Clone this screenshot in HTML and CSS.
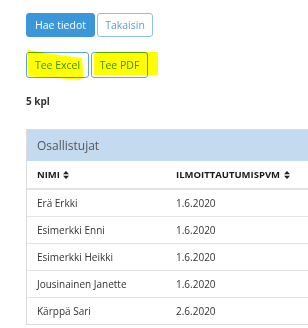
FILE: index.html
```html
<!DOCTYPE html>
<html lang="fi">
<head>
<meta charset="utf-8">
<link rel="stylesheet" href="styles.css">
</head>
<body>
<div class="page">
  <div class="btn-row top">
    <button class="btn primary">Hae tiedot</button>
    <button class="btn outline">Takaisin</button>
  </div>
  <div class="btn-row second">
    <button class="btn outline tall w-excel">Tee Excel</button>
    <button class="btn outline tall w-pdf">Tee PDF</button>
    <svg class="highlight" width="140" height="40" viewBox="0 0 140 40">
      <polygon points="1,0 20,3 40,6 55,8 56,20 56,27 53,30 30,28 10,27 1,26" fill="#ffff00"/>
      <polygon points="67,4 70,2 131,2 131,25 67,25" fill="#ffff00"/>
    </svg>
  </div>
  <div class="count">5 kpl</div>
  <div class="panel">
    <div class="panel-head">Osallistujat</div>
    <table class="grid">
      <thead>
        <tr>
          <th class="c1">NIMI <svg class="sort" width="6" height="8" viewBox="0 0 6 8"><polygon points="3,0 6,3.2 0,3.2" fill="#222"/><polygon points="0,4.8 6,4.8 3,8" fill="#222"/></svg></th>
          <th class="c2">ILMOITTAUTUMISPVM <svg class="sort" width="6" height="8" viewBox="0 0 6 8"><polygon points="3,0 6,3.2 0,3.2" fill="#222"/><polygon points="0,4.8 6,4.8 3,8" fill="#222"/></svg></th>
        </tr>
      </thead>
      <tbody>
        <tr><td class="c1">Erä Erkki</td><td class="c2">1.6.2020</td></tr>
        <tr><td class="c1">Esimerkki Enni</td><td class="c2">1.6.2020</td></tr>
        <tr><td class="c1">Esimerkki Heikki</td><td class="c2">1.6.2020</td></tr>
        <tr><td class="c1">Jousinainen Janette</td><td class="c2">1.6.2020</td></tr>
        <tr><td class="c1">Kärppä Sari</td><td class="c2">2.6.2020</td></tr>
      </tbody>
    </table>
  </div>
</div>
</body>
</html>
```

FILE: styles.css
```css
html, body {
  margin: 0;
  padding: 0;
  background: #fff;
  overflow: hidden;
}
body {
  font-family: "Open Sans", "Noto Sans", sans-serif;
  color: #333;
}
.page {
  padding: 13px 0 0 26px;
}
.btn-row {
  display: flex;
  gap: 2px;
  position: relative;
}
.btn-row.second {
  margin-top: 15px;
}
.btn {
  box-sizing: border-box;
  font-family: inherit;
  font-size: 10.5px;
  height: 24px;
  padding: 0;
  border-radius: 3px;
  border: 1px solid #8cc0e8;
  background: #fff;
  color: #5a9fd9;
  line-height: 22px;
  margin: 0;
  white-space: nowrap;
  text-align: center;
}
.btn.primary {
  background: #3b97d9;
  border-color: #3b97d9;
  color: #fff;
  width: 69px;
}
.btn.outline {
  width: 56px;
}
.btn.tall {
  height: 26px;
  line-height: 24px;
  border-color: #5aa6e0;
  color: #3b8fd4;
}
.btn.w-excel { width: 63px; }
.btn.w-pdf { width: 57px; }
.highlight {
  position: absolute;
  left: 1px;
  top: -2px;
  mix-blend-mode: multiply;
  pointer-events: none;
}
.count {
  margin-top: 16px;
  font-size: 10px;
  font-weight: 700;
  color: #333;
}
.panel {
  margin-top: 21px;
  border: 1px solid #dcdcdc;
  border-right: none;
  width: 281px;
}
.panel-head {
  background: #c4daee;
  height: 31px;
  line-height: 31px;
  padding-left: 10px;
  font-size: 12px;
  color: #555;
}
.grid {
  border-collapse: collapse;
  width: 100%;
}
.grid th, .grid td {
  text-align: left;
  padding: 0 0 0 10px;
  border-bottom: 1px solid #e3e3e3;
  white-space: nowrap;
}
.grid th {
  height: 27px;
  font-size: 9.5px;
  font-weight: 700;
  color: #1a1a1a;
  border-bottom: 2px solid #e3e3e3;
}
.grid td {
  height: 26px;
  font-size: 10px;
  color: #333;
}
.grid tbody tr:last-child td {
  border-bottom: none;
}
.grid .c1 { width: 129px; }
.sort {
  vertical-align: -1px;
  margin-left: 1px;
}
```
